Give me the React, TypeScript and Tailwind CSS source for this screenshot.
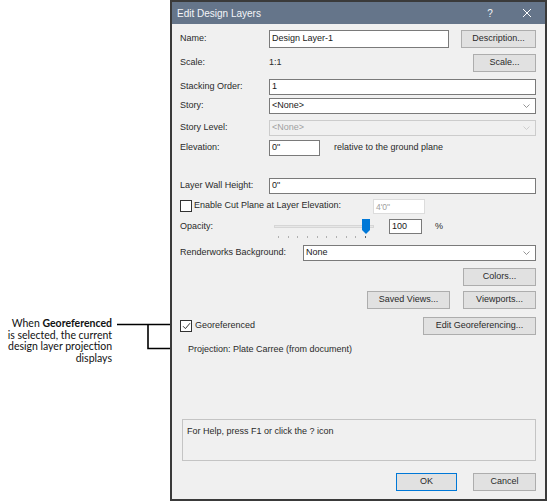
import React from 'react';

const ui = { fontFamily: '"Liberation Sans", Arial, sans-serif' };

function Btn({ w, children, primary }: { w: string; children: React.ReactNode; primary?: boolean }) {
  return (
    <div
      className={
        'h-[18px] flex items-center justify-center bg-[#e1e1e1] text-[9px] text-[#2a2a2a] border ' +
        (primary ? 'border-[#0078d7]' : 'border-[#adadad]') +
        ' ' +
        w
      }
    >
      {children}
    </div>
  );
}

function Field({ w, value, h = 'h-[16px]' }: { w: string; value: string; h?: string }) {
  return (
    <div className={'bg-white border border-[#7a7a7a] flex items-center pl-[2px] text-[9px] text-[#1a1a1a] ' + w + ' ' + h}>
      {value}
    </div>
  );
}

function Chevron({ color = '#7a7a7a' }: { color?: string }) {
  return (
    <svg width="7" height="4" viewBox="0 0 7 4" className="mr-[5px]">
      <path d="M0.5 0.5 L3.5 3.5 L6.5 0.5" fill="none" stroke={color} strokeWidth="0.8" />
    </svg>
  );
}

function Dropdown({ w, value, disabled }: { w: string; value: string; disabled?: boolean }) {
  return (
    <div
      className={
        'h-[16px] flex items-center justify-between pl-[2px] text-[9px] border ' +
        (disabled ? 'bg-[#f0f0f0] border-[#cccccc] text-[#a0a0a0]' : 'bg-white border-[#7a7a7a] text-[#1a1a1a]') +
        ' ' +
        w
      }
    >
      <span>{value}</span>
      <Chevron color={disabled ? '#c4c4c4' : '#7a7a7a'} />
    </div>
  );
}

function Label({ children, w = 'w-[89px]' }: { children: React.ReactNode; w?: string }) {
  return <div className={'text-[9px] text-[#2a2a2a] shrink-0 ' + w}>{children}</div>;
}

function Check({ checked }: { checked?: boolean }) {
  return (
    <div className="w-[12px] h-[12px] bg-white border border-[#333333] flex items-center justify-center shrink-0">
      {checked && (
        <svg width="9" height="8" viewBox="0 0 9 8">
          <path d="M1 4.2 L3.4 6.6 L8 1.2" fill="none" stroke="#333" strokeWidth="1" />
        </svg>
      )}
    </div>
  );
}

function OpacitySlider() {
  const ticks = Array.from({ length: 10 }, (_, i) => i);
  return (
    <div className="w-[100px] h-[19px] flex flex-col ml-[-4px]">
      <div className="h-[15px] flex items-center relative">
        <div className="w-full h-[3px] bg-[#e7e7e7] border border-[#d6d6d6]" />
        <svg width="8" height="15" viewBox="0 0 8 15" className="absolute left-[88px] top-0">
          <path d="M0 0 H8 V11 L4 15 L0 11 Z" fill="#0078d7" />
        </svg>
      </div>
      <div className="flex justify-between pl-[4px] pr-[8px] mt-[2px]">
        {ticks.map(t => (
          <div key={t} className={'w-[1px] h-[2px] ' + (t === 9 ? 'bg-[#606060]' : 'bg-[#b0b0b0]')} />
        ))}
      </div>
    </div>
  );
}

export default function App() {
  return (
    <div className="w-[549px] h-[502px] bg-white flex" style={ui}>
      {/* callout on the left */}
      <div className="w-[170px] shrink-0 flex items-start pt-[318px]">
        <div
          className="w-[112px] text-right text-[10.5px] leading-[11.5px] text-[#111111]"
          style={{ fontFamily: 'Lato, "Open Sans", sans-serif' }}
        >
          <div>
            When <b className="font-bold">Georeferenced</b>
          </div>
          <div>is selected, the current</div>
          <div>design layer projection</div>
          <div>displays</div>
        </div>
        <svg width="58" height="40" viewBox="0 0 58 40">
          <path d="M5 6.5 H58 M36 6.5 V30.5 H58" fill="none" stroke="#000" strokeWidth="1.6" />
        </svg>
      </div>

      {/* dialog */}
      <div className="w-[377px] h-[501px] border-2 border-[#3a3a3a] bg-[#f0f0f0] flex flex-col shrink-0">
        <div className="h-[22px] bg-[#65758a] flex items-center text-[#f4f6f8] text-[10px] pl-[5px] shrink-0">
          <span className="flex-1">Edit Design Layers</span>
          <span className="w-[20px] text-center mr-[22px] text-[10px]">?</span>
          <svg width="10" height="10" viewBox="0 0 10 10" className="mr-[13px]">
            <path d="M1 1 L9 9 M9 1 L1 9" stroke="#fff" strokeWidth="1" />
          </svg>
        </div>

        <div className="flex flex-col pl-[8px] pr-[9px]">
          <div className="flex items-center h-[18px] mt-[6px]">
            <Label>Name:</Label>
            <Field w="w-[180px]" h="h-[18px]" value="Design Layer-1" />
            <div className="flex-1" />
            <Btn w="w-[75px]">Description...</Btn>
          </div>

          <div className="flex items-center h-[18px] mt-[6px]">
            <Label>Scale:</Label>
            <span className="text-[9px] text-[#2a2a2a]">1:1</span>
            <div className="flex-1" />
            <Btn w="w-[63px]">Scale...</Btn>
          </div>

          <div className="flex items-center h-[16px] mt-[7px]">
            <Label>Stacking Order:</Label>
            <Field w="flex-1" value="1" />
          </div>

          <div className="flex items-center h-[16px] mt-[3px]">
            <Label>Story:</Label>
            <Dropdown w="flex-1" value="<None>" />
          </div>

          <div className="flex items-center h-[16px] mt-[6px]">
            <Label>Story Level:</Label>
            <Dropdown w="flex-1" value="<None>" disabled />
          </div>

          <div className="flex items-center h-[16px] mt-[4px]">
            <Label>Elevation:</Label>
            <Field w="w-[51px]" value={'0"'} />
            <span className="ml-[14px] text-[9px] text-[#2a2a2a]">relative to the ground plane</span>
          </div>

          <div className="flex items-center h-[16px] mt-[22px]">
            <Label>Layer Wall Height:</Label>
            <Field w="flex-1" value={'0"'} />
          </div>

          <div className="flex items-center h-[16px] mt-[4px]">
            <Check />
            <span className="ml-[2px] text-[9px] text-[#2a2a2a] w-[179px]">Enable Cut Plane at Layer Elevation:</span>
            <div className="w-[52px] h-[15px] bg-white border border-[#dcdcdc] text-[8.5px] text-[#a0a0a0] pl-[2px] pt-[1px] flex items-start">
              4'0"
            </div>
          </div>

          <div className="flex items-start h-[19px] mt-[5px]">
            <div className="h-[15px] flex items-center">
              <Label w="w-[98px]">Opacity:</Label>
            </div>
            <OpacitySlider />
            <div className="ml-[15px]">
              <Field w="w-[33px]" h="h-[15px]" value="100" />
            </div>
            <span className="ml-[13px] h-[15px] flex items-center text-[9px] text-[#2a2a2a]">%</span>
          </div>

          <div className="flex items-center h-[16px] mt-[7px]">
            <Label w="w-[123px]">Renderworks Background:</Label>
            <Dropdown w="flex-1" value="None" />
          </div>

          <div className="flex justify-end h-[18px] mt-[7px]">
            <Btn w="w-[73px]">Colors...</Btn>
          </div>

          <div className="flex justify-end gap-[13px] h-[18px] mt-[5px]">
            <Btn w="w-[83px]">Saved Views...</Btn>
            <Btn w="w-[73px]">Viewports...</Btn>
          </div>

          <div className="flex items-center h-[17px] mt-[8px]">
            <Check checked />
            <span className="ml-[3px] text-[9px] text-[#2a2a2a]">Georeferenced</span>
            <div className="flex-1" />
            <Btn w="w-[113px]">Edit Georeferencing...</Btn>
          </div>

          <div className="h-[13px] mt-[9px] pl-[8px] text-[9px] text-[#2a2a2a] flex items-center">
            Projection: Plate Carree (from document)
          </div>

          <div className="h-[42px] mt-[63px] ml-[2px] border border-[#c4c4c4] text-[9px] text-[#2a2a2a] px-[4px] pt-[5px]">
            For Help, press F1 or click the ? icon
          </div>

          <div className="flex justify-end gap-[16px] mt-[12px]">
            <Btn w="w-[61px]" primary>
              OK
            </Btn>
            <Btn w="w-[63px]">Cancel</Btn>
          </div>
        </div>
      </div>
    </div>
  );
}
